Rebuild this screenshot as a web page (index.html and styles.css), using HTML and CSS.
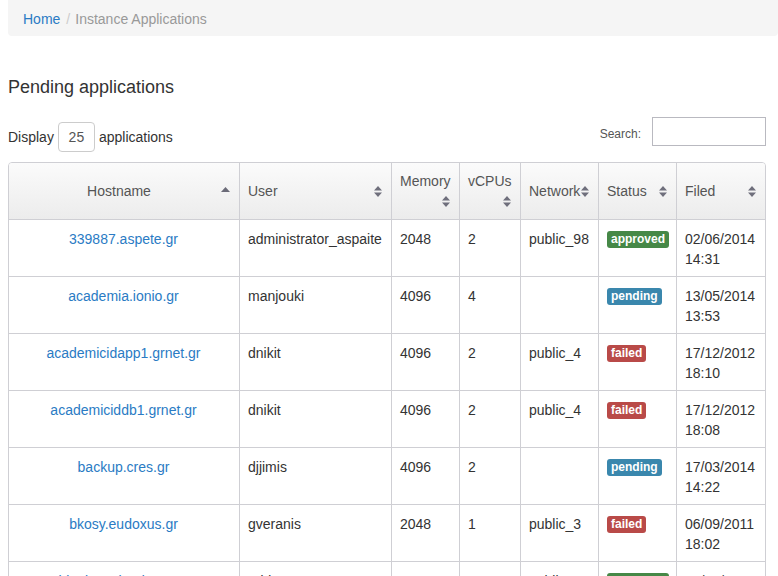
FILE: index.html
```html
<!DOCTYPE html>
<html>
<head>
<meta charset="utf-8">
<link rel="stylesheet" href="styles.css">
</head>
<body>
<div class="page">
  <ol class="breadcrumb">
    <li><a href="#">Home</a></li>
    <li class="sep">/</li>
    <li class="active">Instance Applications</li>
  </ol>

  <h3 class="title">Pending applications</h3>

  <div class="controls">
    <div class="length">Display <span class="len-box">25</span> applications</div>
    <div class="search"><span class="search-label">Search:</span> <span class="search-box"></span></div>
  </div>

  <table class="apps">
    <thead>
      <tr>
        <th class="c-host center">Hostname<span class="sort asc"><svg width="9" height="5" viewBox="0 0 9 5"><path d="M0 5 L4.5 0 L9 5 Z" fill="#6b6b78"/></svg></span></th>
        <th class="c-user">User<span class="sort"><svg width="8" height="11" viewBox="0 0 8 11"><path d="M0 4.5 L4 0 L8 4.5 Z M0 6.5 L8 6.5 L4 11 Z" fill="#6f6f7c"/></svg></span></th>
        <th class="c-mem">Memory<span class="sort"><svg width="8" height="11" viewBox="0 0 8 11"><path d="M0 4.5 L4 0 L8 4.5 Z M0 6.5 L8 6.5 L4 11 Z" fill="#6f6f7c"/></svg></span></th>
        <th class="c-cpu">vCPUs<span class="sort"><svg width="8" height="11" viewBox="0 0 8 11"><path d="M0 4.5 L4 0 L8 4.5 Z M0 6.5 L8 6.5 L4 11 Z" fill="#6f6f7c"/></svg></span></th>
        <th class="c-net">Network<span class="sort"><svg width="8" height="11" viewBox="0 0 8 11"><path d="M0 4.5 L4 0 L8 4.5 Z M0 6.5 L8 6.5 L4 11 Z" fill="#6f6f7c"/></svg></span></th>
        <th class="c-status">Status<span class="sort"><svg width="8" height="11" viewBox="0 0 8 11"><path d="M0 4.5 L4 0 L8 4.5 Z M0 6.5 L8 6.5 L4 11 Z" fill="#6f6f7c"/></svg></span></th>
        <th class="c-filed">Filed<span class="sort"><svg width="8" height="11" viewBox="0 0 8 11"><path d="M0 4.5 L4 0 L8 4.5 Z M0 6.5 L8 6.5 L4 11 Z" fill="#6f6f7c"/></svg></span></th>
      </tr>
    </thead>
    <tbody>
      <tr>
        <td class="center"><a href="#">339887.aspete.gr</a></td>
        <td>administrator_aspaite</td>
        <td>2048</td>
        <td>2</td>
        <td>public_98</td>
        <td><span class="label approved">approved</span></td>
        <td>02/06/2014 14:31</td>
      </tr>
      <tr>
        <td class="center"><a href="#">academia.ionio.gr</a></td>
        <td>manjouki</td>
        <td>4096</td>
        <td>4</td>
        <td></td>
        <td><span class="label pending">pending</span></td>
        <td>13/05/2014 13:53</td>
      </tr>
      <tr>
        <td class="center"><a href="#">academicidapp1.grnet.gr</a></td>
        <td>dnikit</td>
        <td>4096</td>
        <td>2</td>
        <td>public_4</td>
        <td><span class="label failed">failed</span></td>
        <td>17/12/2012 18:10</td>
      </tr>
      <tr>
        <td class="center"><a href="#">academiciddb1.grnet.gr</a></td>
        <td>dnikit</td>
        <td>4096</td>
        <td>2</td>
        <td>public_4</td>
        <td><span class="label failed">failed</span></td>
        <td>17/12/2012 18:08</td>
      </tr>
      <tr>
        <td class="center"><a href="#">backup.cres.gr</a></td>
        <td>djjimis</td>
        <td>4096</td>
        <td>2</td>
        <td></td>
        <td><span class="label pending">pending</span></td>
        <td>17/03/2014 14:22</td>
      </tr>
      <tr>
        <td class="center"><a href="#">bkosy.eudoxus.gr</a></td>
        <td>gveranis</td>
        <td>2048</td>
        <td>1</td>
        <td>public_3</td>
        <td><span class="label failed">failed</span></td>
        <td>06/09/2011 18:02</td>
      </tr>
      <tr>
        <td class="center"><a href="#">bluebox.cloud.uoa.gr</a></td>
        <td>eddy</td>
        <td>4096</td>
        <td>2</td>
        <td>public_4</td>
        <td><span class="label approved">approved</span></td>
        <td>12/03/2013 11:40</td>
      </tr>
    </tbody>
  </table>
</div>
</body>
</html>
```

FILE: styles.css
```css
html, body {
  margin: 0;
  padding: 0;
  background: #ffffff;
}

body {
  font-family: "Liberation Sans", Arial, sans-serif;
  font-size: 14px;
  line-height: 20px;
  color: #333333;
  overflow: hidden;
}

.page {
  padding: 0 12px 0 8px;
}

a {
  color: #2a7bc4;
  text-decoration: none;
}

.breadcrumb {
  list-style: none;
  margin: 0 -12px 0 0;
  padding: 9px 15px 7px 15px;
  background: #f5f5f5;
  border-radius: 0 0 4px 4px;
  display: flex;
  align-items: center;
}

.breadcrumb li {
  display: block;
}

.breadcrumb .sep {
  color: #cccccc;
  padding: 0 5px 0 6px;
}

.breadcrumb .active {
  color: #999999;
}

.title {
  margin: 41px 0 0 0;
  font-size: 18px;
  font-weight: normal;
  line-height: 20px;
  color: #333333;
}

.controls {
  display: flex;
  justify-content: space-between;
  align-items: flex-start;
  margin-top: 20px;
  margin-bottom: 10px;
}

.length {
  margin-top: 5px;
  display: flex;
  align-items: center;
}

.len-box {
  display: inline-block;
  box-sizing: border-box;
  width: 37px;
  height: 30px;
  margin: 0 4px 0 4px;
  border: 1px solid #cccccc;
  border-radius: 4px;
  text-align: center;
  line-height: 28px;
  color: #555555;
}

.search {
  display: flex;
  align-items: flex-start;
  font-size: 12px;
  color: #555555;
}

.search-label {
  margin-top: 7px;
}

.search-box {
  display: inline-block;
  box-sizing: border-box;
  width: 114px;
  height: 29px;
  margin-left: 11px;
  border: 1px solid #b9b9c0;
  background: #ffffff;
}

.apps {
  width: 758px;
  table-layout: fixed;
  border-collapse: separate;
  border-spacing: 0;
  border: 1px solid #cfcfd4;
  border-radius: 4px 4px 0 0;
}

.apps th,
.apps td {
  box-sizing: border-box;
  padding: 8px 9px 8px 8px;
  border-left: 1px solid #cfcfd4;
  border-top: 1px solid #cfcfd4;
  text-align: left;
}

.apps th:first-child,
.apps td:first-child {
  border-left: 0;
}

.apps thead th {
  border-top: 0;
  height: 56px;
  vertical-align: middle;
  font-weight: normal;
  color: #555555;
  background: linear-gradient(to bottom, #fbfbfb 0%, #ececec 100%);
}

.apps thead th:first-child {
  border-top-left-radius: 3px;
}

.apps thead th:last-child {
  border-top-right-radius: 3px;
}

.apps td {
  vertical-align: top;
  height: 57px;
  padding-top: 9px;
  padding-bottom: 7px;
}

.apps .center {
  text-align: center;
}

.c-host { width: 230px; }
.c-user { width: 152px; }
.c-mem { width: 68px; }
.c-cpu { width: 61px; }
.c-net { width: 78px; }
.c-status { width: 78px; }
.c-filed { width: 89px; }

.sort {
  float: right;
  height: 20px;
  display: flex;
  align-items: center;
}

.sort svg {
  display: block;
}

.sort.asc {
  padding-bottom: 4px;
  box-sizing: border-box;
}

.label {
  display: inline-block;
  font-size: 12px;
  font-weight: bold;
  line-height: 13px;
  color: #ffffff;
  padding: 2px 4px 2px 4px;
  border-radius: 3px;
  vertical-align: 1px;
}

.label.approved { background: #468847; }
.label.pending { background: #3a87ad; }
.label.failed { background: #b94a48; }
```
